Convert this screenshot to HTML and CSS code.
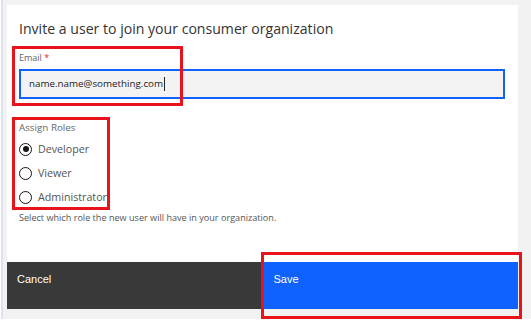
FILE: index.html
```html
<!DOCTYPE html>
<html lang="en">
  <head>
    <meta charset="UTF-8" />
    <title>Invite a user</title>
    <link rel="stylesheet" href="styles.css">
  </head>
  <body>
    <div class="frame">
      <div class="modal">
        <h2 class="title">Invite a user to join your consumer organization</h2>
        <div class="field">
          <label class="label">Email <span class="req">*</span></label>
          <div class="input">name.name@something.com<span class="caret"></span></div>
        </div>
        <div class="field roles">
          <div class="label">Assign Roles</div>
          <label class="radio"><span class="dot checked"></span>Developer</label>
          <label class="radio"><span class="dot"></span>Viewer</label>
          <label class="radio"><span class="dot"></span>Administrator</label>
          <p class="help">Select which role the new user will have in your organization.</p>
        </div>
        <div class="actions">
          <button class="btn cancel">Cancel</button>
          <button class="btn save">Save</button>
        </div>
        <!-- annotation boxes -->
        <div class="mark mark-email"></div>
        <div class="mark mark-roles"></div>
        <div class="mark mark-save"></div>
      </div>
    </div>
    <div class="foot"></div>
  </body>
</html>
```

FILE: styles.css
```css
* {
  margin: 0;
  padding: 0;
  box-sizing: border-box;
}
body {
  background: #fff;
  font-family: "Open Sans", "Noto Sans", sans-serif;
  color: #393939;
}
.frame {
  height: 319px;
  background: #f2f2f2;
  margin-left: 1px;
  border-left: 2px solid #dde3ee;
  padding: 5px 13px 0 4px;
}
.modal {
  position: relative;
  background: #fff;
  height: 304px;
  display: flex;
  flex-direction: column;
}
.title {
  font-weight: 400;
  font-size: 14.1px;
  line-height: 20px;
  color: #333;
  padding: 14px 12px 0;
}
.field {
  padding: 0 13px 0 12px;
}
.label {
  display: block;
  font-size: 9px;
  line-height: 12px;
  color: #666;
  margin-top: 13px;
  margin-bottom: 5px;
}
.req {
  color: #da1e28;
}
.input {
  height: 30px;
  border: 2px solid #0f62fe;
  background: #f3f3f3;
  padding-left: 8px;
  font-size: 9.8px;
  line-height: 26px;
  color: #222;
  display: flex;
  align-items: center;
}
.caret {
  width: 1px;
  height: 14px;
  background: #222;
  margin-left: 1px;
}
.roles .label {
  font-size: 9.8px;
  margin-top: 23px;
  margin-bottom: 3px;
}
.radio {
  display: flex;
  align-items: center;
  height: 24px;
  font-size: 10.7px;
  color: #555;
}
.dot {
  width: 13px;
  height: 13px;
  border: 1.5px solid #161616;
  border-radius: 50%;
  margin-right: 6px;
  display: flex;
  align-items: center;
  justify-content: center;
}
.dot.checked::after {
  content: "";
  width: 6px;
  height: 6px;
  border-radius: 50%;
  background: #161616;
}
.help {
  font-size: 9.1px;
  line-height: 12px;
  color: #555;
  margin-top: 3px;
}
.actions {
  margin-top: auto;
  display: flex;
  height: 47px;
}
.btn {
  flex: 1;
  border: 0;
  color: #fff;
  font-family: "Liberation Sans", Arial, sans-serif;
  font-size: 11px;
  text-align: left;
  display: flex;
  padding: 11px 10px;
}
.cancel {
  background: #393939;
}
.save {
  background: #0f62fe;
  padding-left: 12px;
}
.mark {
  position: absolute;
  border: 3px solid #e8141c;
}
.mark-email {
  left: 5px;
  top: 41px;
  width: 171px;
  height: 60px;
}
.mark-roles {
  left: 5px;
  top: 112px;
  width: 98px;
  height: 93px;
}
.mark-save {
  left: 254px;
  top: 247px;
  width: 261px;
  height: 67px;
}
.foot {
  height: 10px;
}
```
